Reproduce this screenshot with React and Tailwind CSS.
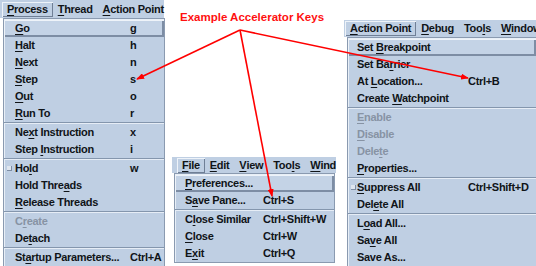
import React from "react";

const U = ({ t, u }) => {
  if (u == null || u < 0) return <>{t}</>;
  return (
    <>
      {t.slice(0, u)}
      <span className="underline underline-offset-2 decoration-1">{t[u]}</span>
      {t.slice(u + 1)}
    </>
  );
};

const Sep = () => (
  <div className="h-[2px] flex flex-col">
    <div className="h-px bg-[#8496ad]" />
    <div className="h-px bg-[#e6edf6]" />
  </div>
);

const Mark = () => (
  <span className="absolute left-[3px] top-[6px] w-[5px] h-[5px] bg-[#dfe6ef] border-r border-b border-[#7d8da4]" />
);

function Dropdown({ items, pl, labelW, className }) {
  return (
    <div
      className={
        "bg-[#bfcfe3] border border-[#8a9ab0] shadow-[inset_1px_1px_0_#e8eff7] " +
        className
      }
    >
      {items.map((it, i) =>
        it.sep ? (
          <Sep key={i} />
        ) : (
          <div
            key={i}
            className={
              "relative flex items-center h-[17px] " +
              (it.hl
                ? "bg-[#c4d3e6] shadow-[inset_1px_1px_0_#eef3f9,inset_-2px_-2px_0_#7d8da4] "
                : "") +
              (it.dis ? "text-[#8793a4]" : "text-[#101418]")
            }
            style={{ paddingLeft: pl }}
          >
            {it.mark && <Mark />}
            <span className="shrink-0 whitespace-nowrap" style={{ width: labelW }}>
              <U t={it.l} u={it.u} />
            </span>
            {it.a && <span className="whitespace-nowrap">{it.a}</span>}
          </div>
        )
      )}
    </div>
  );
}

function MenuBar({ items, className }) {
  return (
    <div className={"flex items-center bg-[#bfcfe3] text-[#101418] " + className}>
      {items.map((it, i) => (
        <div
          key={i}
          className={
            "px-[5px] h-[15px] flex items-center whitespace-nowrap " +
            (it.box
              ? "shadow-[inset_1px_1px_0_#eef3f9,inset_-1px_-1px_0_#6f7f96]"
              : "")
          }
        >
          <U t={it.l} u={it.u} />
        </div>
      ))}
    </div>
  );
}

const leftItems = [
  { l: "Go", u: 0, a: "g", hl: true },
  { l: "Halt", u: 0, a: "h" },
  { l: "Next", u: 0, a: "n" },
  { l: "Step", u: 0, a: "s" },
  { l: "Out", u: 0, a: "o" },
  { l: "Run To", u: 0, a: "r" },
  { sep: true },
  { l: "Next Instruction", u: 2, a: "x" },
  { l: "Step Instruction", u: 5, a: "i" },
  { sep: true },
  { l: "Hold", u: 2, a: "w", mark: true },
  { l: "Hold Threads", u: 9 },
  { l: "Release Threads", u: 0 },
  { sep: true },
  { l: "Create", u: 1, dis: true },
  { l: "Detach", u: 2 },
  { sep: true },
  { l: "Startup Parameters...", u: 2, a: "Ctrl+A" },
];

const midItems = [
  { l: "Preferences...", u: 0, hl: true },
  { l: "Save Pane...", u: 1, a: "Ctrl+S" },
  { sep: true },
  { l: "Close Similar", u: 1, a: "Ctrl+Shift+W" },
  { l: "Close", u: 0, a: "Ctrl+W" },
  { l: "Exit", u: 1, a: "Ctrl+Q" },
];

const rightItems = [
  { l: "Set Breakpoint", u: 4, hl: true },
  { l: "Set Barrier", u: 6 },
  { l: "At Location...", u: 3, a: "Ctrl+B" },
  { l: "Create Watchpoint", u: 7 },
  { sep: true },
  { l: "Enable", u: 0, dis: true },
  { l: "Disable", u: 0, dis: true },
  { l: "Delete", u: 4, dis: true },
  { l: "Properties...", u: 0 },
  { sep: true },
  { l: "Suppress All", u: 0, a: "Ctrl+Shift+D", mark: true },
  { l: "Delete All", u: 3 },
  { sep: true },
  { l: "Load All...", u: 1 },
  { l: "Save All", u: 2 },
  { l: "Save As..." },
];

export default function App() {
  return (
    <div className="relative w-[536px] h-[266px] bg-white overflow-hidden font-['Liberation_Sans',Arial,sans-serif] font-bold text-[11px] tracking-[-0.3px] leading-none">
      {/* Left menu */}
      <div className="absolute left-0 top-0 w-[166px]">
        <MenuBar
          className="h-[18px] w-[164px] pl-[2px]"
          items={[
            { l: "Process", u: 0, box: true },
            { l: "Thread", u: 0 },
            { l: "Action Point", u: 0 },
          ]}
        />
        <Dropdown items={leftItems} pl={11} labelW={115} className="ml-[3px] w-[162px] pt-px" />
      </div>

      {/* Middle menu */}
      <div className="absolute left-[172px] top-[157px] w-[164px]">
        <MenuBar
          className="h-[16px] w-[164px] pl-[5px]"
          items={[
            { l: "File", u: 0, box: true },
            { l: "Edit", u: 0 },
            { l: "View", u: 0 },
            { l: "Tools", u: 3 },
            { l: "Wind", u: 0 },
          ]}
        />
        <Dropdown items={midItems} pl={10} labelW={78} className="ml-[2px] w-[161px] pt-px" />
      </div>

      {/* Right menu */}
      <div className="absolute left-[344px] top-[20px] w-[200px]">
        <MenuBar
          className="h-[17px] w-[200px] pl-[1px]"
          items={[
            { l: "Action Point", u: 0, box: true },
            { l: "Debug", u: 0 },
            { l: "Tools", u: 3 },
            { l: "Window", u: 0 },
          ]}
        />
        <Dropdown items={rightItems} pl={9} labelW={111} className="ml-[3px] w-[190px] pt-px" />
      </div>

      {/* Annotation */}
      <div className="absolute left-[180px] top-[10px] text-[#ff1010] text-[11.5px] tracking-normal leading-[14px]">
        Example Accelerator Keys
      </div>
      <svg className="absolute inset-0 pointer-events-none" width="536" height="266">
        <defs>
          <marker id="ah" markerWidth="8" markerHeight="6" refX="7" refY="3" orient="auto" markerUnits="userSpaceOnUse">
            <path d="M0,0 L8,3 L0,6 Z" fill="#ff0000" />
          </marker>
        </defs>
        <g stroke="#ff0000" strokeWidth="1.6" fill="none">
          <line x1="240" y1="30" x2="137" y2="79" markerEnd="url(#ah)" />
          <line x1="240" y1="30" x2="272" y2="196" markerEnd="url(#ah)" />
          <line x1="240" y1="30" x2="468" y2="78" markerEnd="url(#ah)" />
        </g>
      </svg>
    </div>
  );
}
